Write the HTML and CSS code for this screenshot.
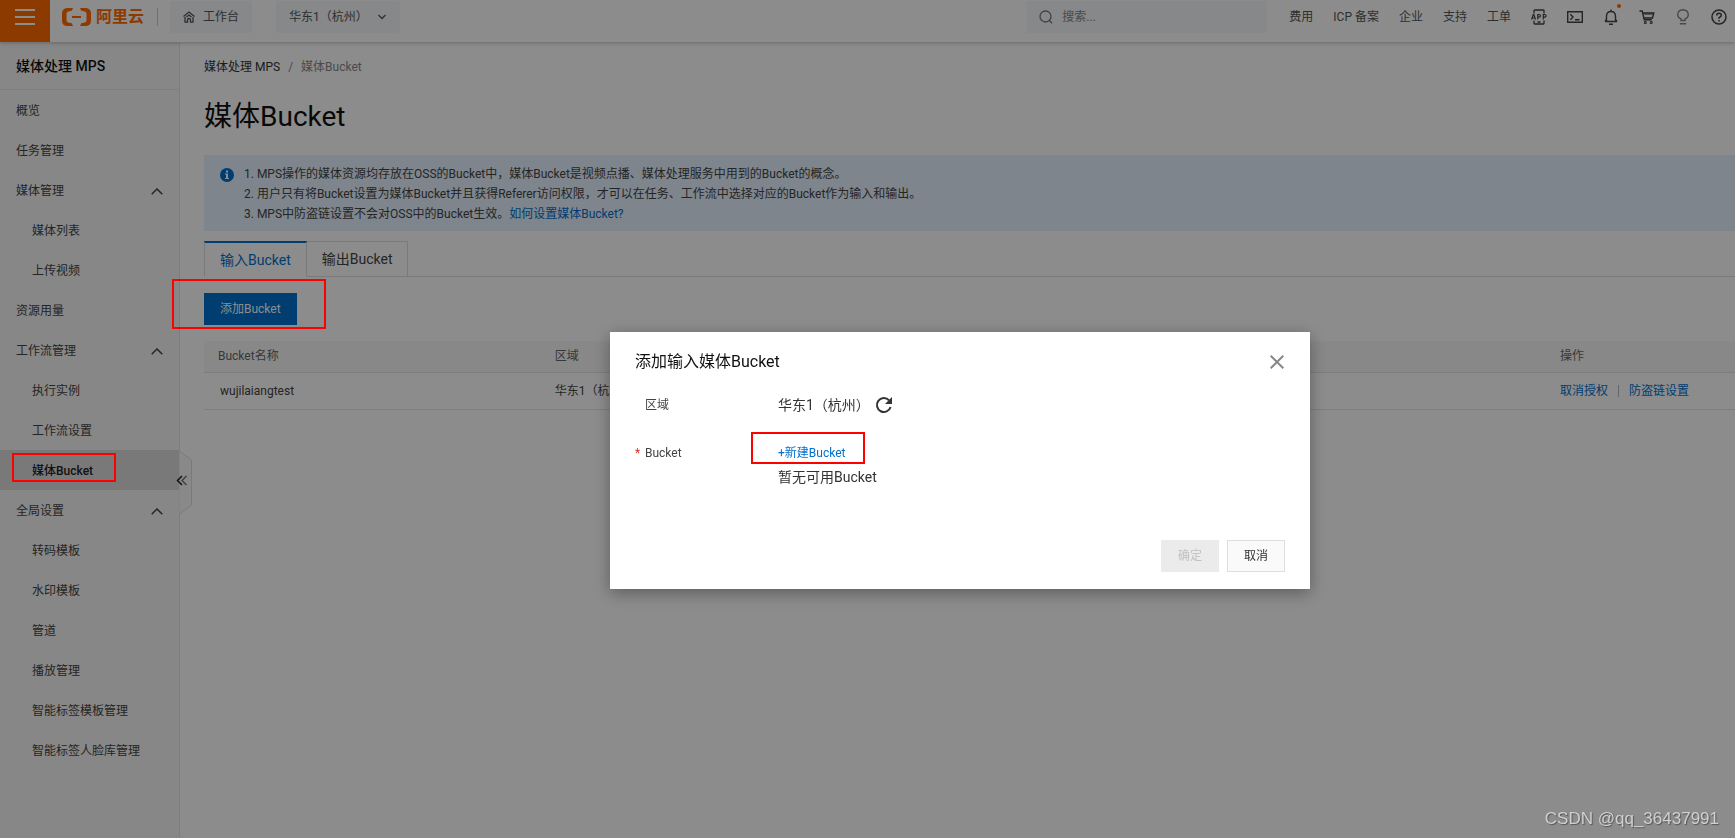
FILE: index.html
```html
<!DOCTYPE html>
<html lang="zh-CN">
<head>
<meta charset="utf-8">
<title>媒体Bucket</title>
<link rel="stylesheet" href="styles.css">
</head>
<body>
<div class="app">
  <header class="topbar">
    <button class="menu-btn" aria-label="菜单"><svg width="20" height="18" viewBox="0 0 20 18"><path d="M0 2h20M0 9h20M0 16h20" stroke="#fff" stroke-width="2"/></svg></button>
    <a class="logo" href="#"><svg width="29" height="18" viewBox="0 0 29 18"><path d="M11 0H6Q0 0 0 5.500v7Q0 18 6 18h5l-1.200-2.800-3.600-.7q-1.700-.4-1.700-2.200V5.700q0-1.800 1.700-2.200l3.600-.7zM18 0h5q6 0 6 5.500v7Q29 18 23 18h-5l1.200-2.800 3.600-.7q1.700-.4 1.700-2.200V5.700q0-1.800-1.700-2.200l-3.600-.7zM10 8h9v2h-9z" fill="#ff6a00"/></svg><span>阿里云</span></a>
    <span class="divider"></span>
    <button class="top-btn workbench"><svg width="12" height="12" viewBox="0 0 12 12" fill="none" stroke="#555" stroke-width="1.300"><path d="M.5 5.500 6 1l5.500 4.500M2 6v5.200h2.500V9q0-1.500 1.500-1.500T7.500 9v2.200H10V6M3.500 6 6 4l2.500 2"/></svg>工作台</button>
    <button class="top-btn region">华东1（杭州）<svg width="8" height="6" viewBox="0 0 8 6" fill="none" stroke="#555" stroke-width="1.300"><path d="M.5 1 4 4.500 7.500 1"/></svg></button>
    <label class="search"><svg width="14" height="14" viewBox="0 0 14 14" fill="none" stroke="#777" stroke-width="1.300"><circle cx="6.500" cy="6.500" r="5.500"/><path d="m10 10 3 3.300"/></svg><input type="text" placeholder="搜索..." aria-label="搜索"></label>
    <nav class="top-links">
      <a href="#">费用</a><a href="#">ICP 备案</a><a href="#">企业</a><a href="#">支持</a><a href="#">工单</a>
      <a href="#" aria-label="APP"><svg viewBox="0 0 16 16" fill="none" stroke="#444" stroke-width="1.300"><path d="M3 4.500V1.700Q3 1 3.700 1h8.600q.7 0 .7.700V4.500M3 11.500v2.800q0 .7.700.7h8.600q.7 0 .7-.7v-2.800M6.500 13h3"/><path d="M.6 10.500 2.300 5.500h.5l1.700 5M1.200 9h2.700M6.800 10.500v-5h1.400q1.200 0 1.200 1.300T8.200 8.200H6.800M12.300 10.500v-5h1.300q1.500 0 1.500 1.300t-1.500 1.400h-1.300" stroke-width="1.200"/></svg></a>
      <a href="#" aria-label="终端"><svg viewBox="0 0 16 16" fill="none" stroke="#444" stroke-width="1.400"><path d="M.7 2.700h14.600v10.600H.7zM3.300 5.300 6 8l-2.700 2.700M8 10.700h4.500"/></svg></a>
      <a href="#" class="bell" aria-label="通知"><svg viewBox="0 0 16 16" fill="none" stroke="#444" stroke-width="1.400"><path d="M2 12.500h12M3.500 12.500V7Q3.500 2.500 8 2.500T12.500 7v5.500M8 .5v2M2 12.500l1.500-2M14 12.500l-1.500-2M6 15.200h4"/></svg></a>
      <a href="#" aria-label="购物车"><svg viewBox="0 0 16 16" fill="none" stroke="#444" stroke-width="1.400"><path d="M.5 2h2.700l2 8.700h7.600M3.700 4h11.100l-1.300 5H4.800"/><path d="M5.300 5h8.500M5.400 12.500h1.800v2H5.400zM11.300 12.500h1.800v2h-1.800z" stroke-width="1"/></svg></a>
      <a href="#" aria-label="提示"><svg viewBox="0 0 16 16" fill="none" stroke="#888" stroke-width="1.400"><path d="M6 11.500V10Q2.700 8.500 2.700 5.700 3 1 8 .8q5 .2 5.300 4.900Q13.300 8.500 10 10v1.500zM4.800 14.800h6.400"/></svg></a>
      <a href="#" aria-label="帮助"><svg viewBox="0 0 16 16" fill="none" stroke="#444" stroke-width="1.500"><circle cx="8" cy="8" r="7"/><path d="M5.700 6.500Q5.700 4.200 8 4.200t2.300 2Q10.300 7.500 8 8.600v1.200M8 11v1.500"/></svg></a>
    </nav>
  </header>
  <div class="body">
    <aside class="side">
      <h2>媒体处理 MPS</h2>
      <nav>
        <a href="#">概览</a>
        <a href="#">任务管理</a>
        <a href="#">媒体管理<svg class="up" viewBox="0 0 12 7"><path d="M.7 6.300 6 1l5.300 5.300"/></svg></a>
        <a href="#" class="sub">媒体列表</a>
        <a href="#" class="sub">上传视频</a>
        <a href="#">资源用量</a>
        <a href="#">工作流管理<svg class="up" viewBox="0 0 12 7"><path d="M.7 6.300 6 1l5.300 5.300"/></svg></a>
        <a href="#" class="sub">执行实例</a>
        <a href="#" class="sub">工作流设置</a>
        <a href="#" class="sub current">媒体Bucket</a>
        <a href="#">全局设置<svg class="up" viewBox="0 0 12 7"><path d="M.7 6.300 6 1l5.300 5.300"/></svg></a>
        <a href="#" class="sub">转码模板</a>
        <a href="#" class="sub">水印模板</a>
        <a href="#" class="sub">管道</a>
        <a href="#" class="sub">播放管理</a>
        <a href="#" class="sub">智能标签模板管理</a>
        <a href="#" class="sub">智能标签人脸库管理</a>
      </nav>
      <button class="collapse" aria-label="收起"><svg width="16" height="65" viewBox="0 0 16 65" fill="none"><path d="M3.500 0v1L15.500 10v45L3.500 64v1" fill="#fafafa" stroke="#dedede"/><path d="M6 26 1.500 30.500 6 35" stroke="#222" stroke-width="1.500"/><path d="M10.500 26 6 30.500 10.500 35" stroke="#777" stroke-width="1.500"/></svg></button>
    </aside>
    <main class="main">
      <nav class="crumbs"><a href="#">媒体处理 MPS</a><span>/</span><span>媒体Bucket</span></nav>
      <h1>媒体Bucket</h1>
      <section class="notice">
        <svg width="14" height="14" viewBox="0 0 14 14"><circle cx="7" cy="7" r="7" fill="#0070cc"/><path d="M6 2.500h2v2H6zM5 5.500h3v4.500h1v1H5v-1h1V6.500H5z" fill="#fff"/></svg>
        <div>
          <p>1. MPS操作的媒体资源均存放在OSS的Bucket中，媒体Bucket是视频点播、媒体处理服务中用到的Bucket的概念。</p>
          <p>2. 用户只有将Bucket设置为媒体Bucket并且获得Referer访问权限，才可以在任务、工作流中选择对应的Bucket作为输入和输出。</p>
          <p>3. MPS中防盗链设置不会对OSS中的Bucket生效。<a href="#">如何设置媒体Bucket?</a></p>
        </div>
      </section>
      <div class="tabs" role="tablist">
        <button role="tab" aria-selected="true" class="tab on">输入Bucket</button>
        <button role="tab" aria-selected="false" class="tab">输出Bucket</button>
      </div>
      <button class="primary">添加Bucket</button>
      <table class="grid">
        <thead><tr><th class="c-name">Bucket名称</th><th class="c-region">区域</th><th class="c-ops">操作</th></tr></thead>
        <tbody><tr><td class="name">wujilaiangtest</td><td>华东1（杭州）</td><td><div class="ops"><a href="#">取消授权</a><i></i><a href="#">防盗链设置</a></div></td></tr></tbody>
      </table>
    </main>
  </div>
</div>
<div class="mask">
  <section class="dialog" role="dialog" aria-labelledby="dlg-title">
    <header><h3 id="dlg-title">添加输入媒体Bucket</h3><button class="close" aria-label="关闭"><svg width="14" height="14" viewBox="0 0 14 14"><path d="m.7.7 12.600 12.600M13.300.7.7 13.300" stroke="#888" stroke-width="2"/></svg></button></header>
    <div class="field">
      <span class="req"></span><span class="label">区域</span>
      <div class="value row">华东1（杭州）<button class="refresh" aria-label="刷新"><svg width="18" height="18" viewBox="0 0 18 18"><path d="M15.600 11A7 7 0 1 1 14 4.200" fill="none" stroke="#333" stroke-width="2"/><path d="M17 1v7h-7z" fill="#333"/></svg></button></div>
    </div>
    <div class="field bucket">
      <span class="req">*</span><span class="label">Bucket</span>
      <div class="value"><a class="create" href="#">+新建Bucket</a><p>暂无可用Bucket</p></div>
    </div>
    <footer><button class="btn" disabled>确定</button><button class="btn">取消</button></footer>
    <span class="mark mark-create"></span>
  </section>
</div>
<span class="mark mark-menu"></span>
<span class="mark mark-add"></span>
<span class="watermark">CSDN @qq_36437991</span>
</body>
</html>
```
FILE: styles.css
```css
* { box-sizing: border-box; }
body { margin: 0; font: 12px/20px Roboto, "Noto Sans CJK SC", sans-serif; color: #444; background: #fff; }
h1, h2, h3, p { margin: 0; font-weight: 400; }
a { color: inherit; text-decoration: none; }
button, input { font: inherit; color: inherit; border: 0; padding: 0; margin: 0; background: none; border-radius: 0; }
svg { display: block; flex: none; }

.app { min-height: 100vh; display: flex; flex-direction: column; }
.topbar { height: 42px; display: flex; align-items: flex-start; position: relative; z-index: 1; box-shadow: 0 1px 4px rgba(0, 0, 0, .25); background: #fff; }
.menu-btn { width: 50px; height: 42px; padding: 8px 15px; background: #ff6a00; display: flex; align-items: flex-start; }
.logo { display: flex; align-items: center; gap: 5px; height: 34px; margin-left: 12px; color: #ff6a00; font-size: 16px; font-weight: 700; }
.divider { width: 1px; height: 18px; background: #ccc; margin: 8px 12px 0 13px; }
.top-btn { height: 32px; margin-top: 1px; background: #f5f7fa; border-radius: 2px; display: flex; align-items: center; color: #555; }
.workbench { padding: 0 13px; gap: 8px; margin-right: 24px; }
.region { padding: 0 14px 0 13px; gap: 10px; }
.search { width: 240px; height: 32px; margin: 1px 22px 0 auto; padding: 0 12px; background: #f5f7fa; display: flex; align-items: center; gap: 9px; }
.search input { flex: 1; min-width: 0; outline: 0; }
.search input::placeholder { color: #888; opacity: 1; }
.top-links { display: flex; align-items: center; gap: 20px; height: 34px; padding-right: 8px; color: #555; }
.top-links svg { width: 16px; height: 16px; }
.bell { position: relative; }
.bell::after { content: ""; position: absolute; right: -2px; top: -5px; width: 4px; height: 4px; border-radius: 2px; background: #ff6a00; }

.body { flex: 1; display: flex; }
.side { width: 180px; flex: none; position: relative; background: #f6f6f6; border-right: 1px solid #e5e5e5; }
.side h2 { height: 48px; padding-left: 16px; border-bottom: 1px solid #e5e5e5; font-size: 14px; line-height: 49px; font-weight: 500; color: #111; }
.side nav a { display: flex; align-items: center; justify-content: space-between; height: 40px; padding: 2px 16px 0; }
.side nav .sub { padding-left: 32px; }
.side nav .current { background: #dcdcdc; font-weight: 500; color: #222; }
.up { width: 12px; height: 7px; fill: none; stroke: #444; stroke-width: 1.5; }
.collapse { position: absolute; right: -13px; top: 408px; }

.main { flex: 1; min-width: 0; padding: 15px 0 24px 24px; }
.crumbs { display: flex; gap: 8px; color: #888; }
.crumbs a { color: #333; }
h1 { font-size: 28px; line-height: 40px; margin: 20px 0 18px; color: #111; }
.notice { display: flex; gap: 10px; padding: 9px 16px 7px; background: #e6f2ff; }
.notice svg { margin-top: 4px; }
.notice a, .ops a, .create { color: #0070cc; }
.tabs { display: flex; margin: 10px 0 16px; border-bottom: 1px solid #dedede; }
.tab { height: 36px; padding: 0 15px; font-size: 14px; border: 1px solid #dedede; border-left: 0; margin-bottom: -1px; }
.tab.on { color: #0070cc; border-left: 1px solid #dedede; border-top: 2px solid #0070cc; border-bottom-color: #fff; }
.primary { display: block; height: 32px; padding: 0 16px; background: #0070cc; color: #fff; margin-bottom: 16px; }
.grid { width: 100%; border-collapse: collapse; table-layout: fixed; }
.grid th, .grid td { padding: 5px 14px; text-align: left; font-weight: 400; border-bottom: 1px solid #e5e5e5; }
.grid th { background: #f8f8f8; color: #666; height: 31px; }
.grid td { height: 37px; }
.grid .name { padding-left: 16px; }
.c-name { width: 22%; }
.c-ops { width: 189px; }
.ops { display: flex; align-items: center; gap: 10px; }
.ops i { width: 1px; height: 12px; background: #bbb; }

.mask { position: fixed; inset: 0; z-index: 2; display: flex; align-items: center; justify-content: center; padding: 82px 0 0 185px; background: rgba(0, 0, 0, .45); }
.dialog { position: relative; width: 700px; padding: 20px 25px 17px; background: #fff; box-shadow: 0 4px 16px rgba(0, 0, 0, .35); }
.dialog header { display: flex; justify-content: space-between; align-items: center; height: 20px; }
.dialog h3 { font-size: 16px; color: #111; }
.close { padding-right: 1px; }
.field { display: flex; line-height: 24px; margin-top: 21px; }
.field.bucket { margin-top: 24px; }
.req { width: 10px; color: #d93026; }
.label { width: 133px; }
.value { font-size: 14px; color: #333; }
.row { display: flex; align-items: center; gap: 5px; line-height: 22px; height: 24px; }
.create { font-size: 12px; display: block; }
.dialog footer { display: flex; justify-content: flex-end; gap: 8px; margin-top: 51px; }
.btn { width: 58px; height: 32px; border: 1px solid #dedede; background: #fafafa; color: #333; }
.btn:disabled { border-color: #ebebeb; background: #ebebeb; color: #c1c1c1; }

.mark { position: absolute; z-index: 3; border: 2px solid #f00; pointer-events: none; }
.mark-create { left: 141px; top: 100px; width: 114px; height: 32px; }
.mark-menu { left: 12px; top: 453px; width: 104px; height: 29px; }
.mark-add { left: 172px; top: 279px; width: 154px; height: 50px; }
.watermark { position: fixed; z-index: 3; right: 16px; bottom: 8px; font: 17px/22px "Liberation Sans", sans-serif; color: #d0d0d0; text-shadow: 1px 1px 1px #555; }
```
